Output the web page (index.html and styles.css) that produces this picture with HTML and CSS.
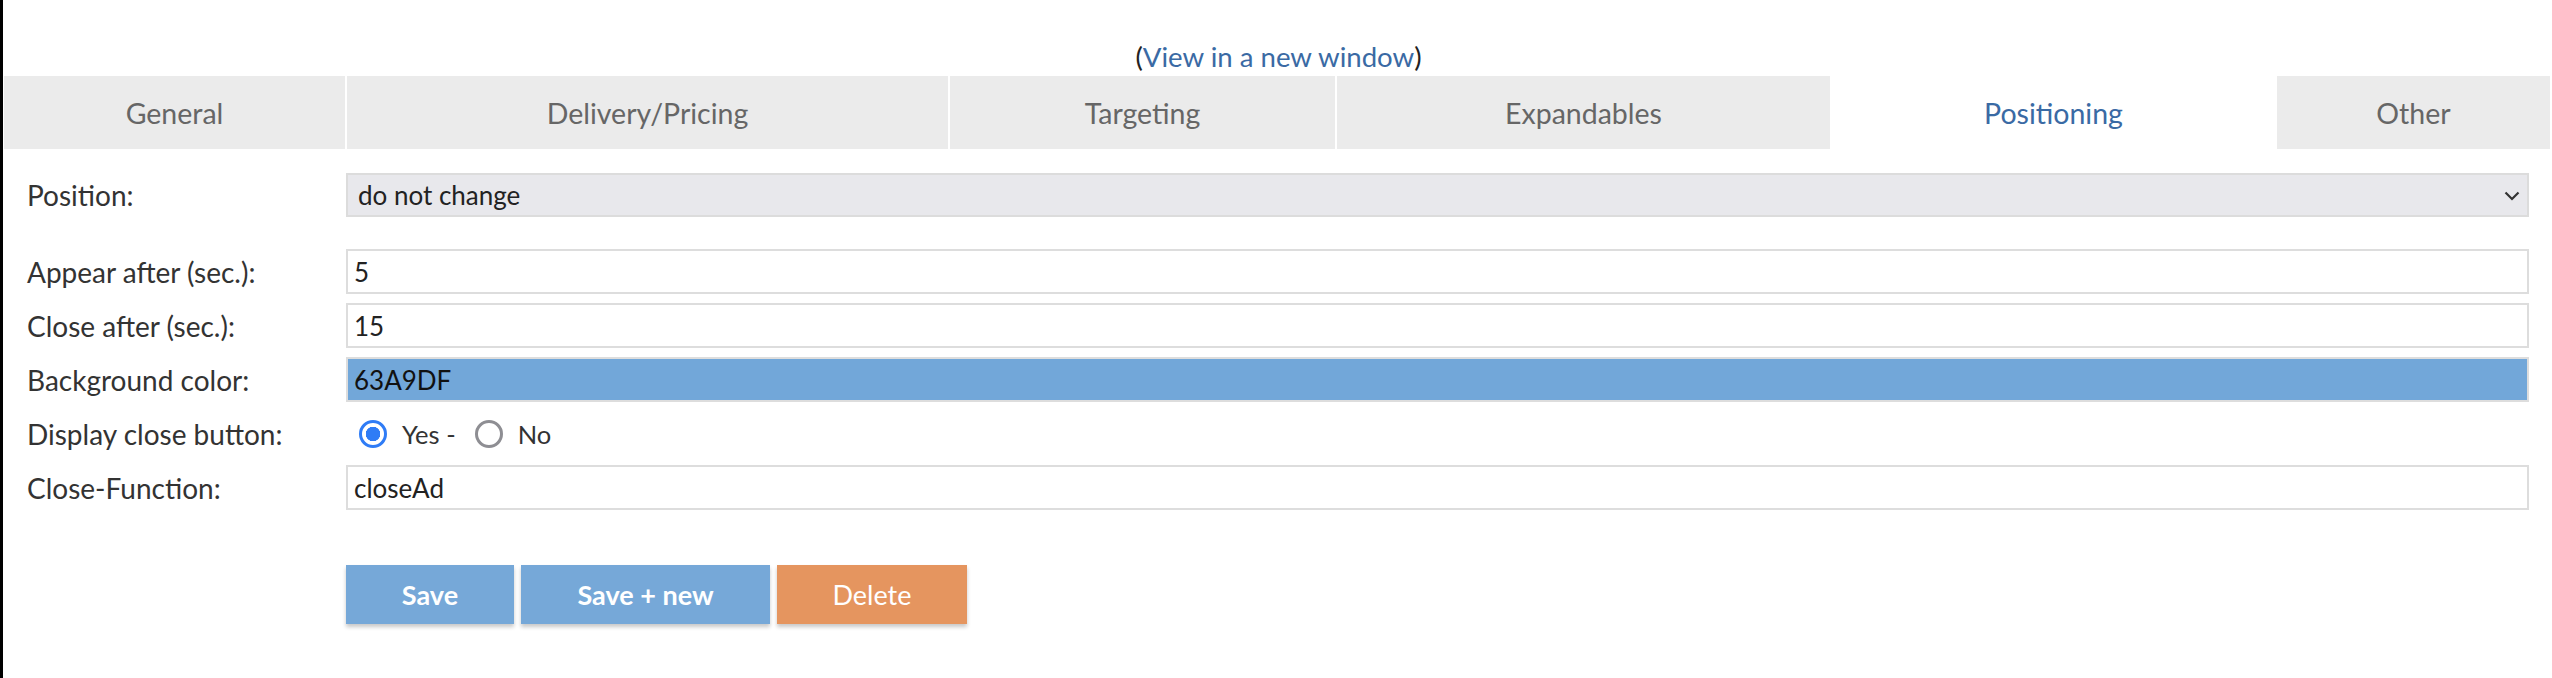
FILE: index.html
```html
<!DOCTYPE html>
<html lang="en">
<head>
<meta charset="utf-8">
<title>Positioning</title>
<link rel="stylesheet" href="styles.css">
</head>
<body>
<div class="page">
  <div class="viewlink">(<a href="#">View in a new window</a>)</div>
  <nav class="tabs">
    <div class="tab">General</div>
    <div class="tab">Delivery/Pricing</div>
    <div class="tab">Targeting</div>
    <div class="tab">Expandables</div>
    <div class="tab active">Positioning</div>
    <div class="tab">Other</div>
  </nav>
  <form class="form">
    <div class="row row-select">
      <label class="label">Position:</label>
      <div class="select-wrap">
        <select class="select"><option>do not change</option></select>
        <svg class="chevron" width="16" height="10" viewBox="0 0 16 10"><path d="M1.5 1.5 L8 8 L14.5 1.5" fill="none" stroke="#333" stroke-width="2.2"/></svg>
      </div>
    </div>
    <div class="fields">
      <div class="row">
        <label class="label">Appear after (sec.):</label>
        <input class="input" type="text" value="5">
      </div>
      <div class="row">
        <label class="label">Close after (sec.):</label>
        <input class="input" type="text" value="15">
      </div>
      <div class="row">
        <label class="label">Background color:</label>
        <input class="input input-color" type="text" value="63A9DF">
      </div>
      <div class="row">
        <label class="label">Display close button:</label>
        <div class="radios">
          <span class="radio checked"></span><span class="radio-text">Yes -</span>
          <span class="radio"></span><span class="radio-text">No</span>
        </div>
      </div>
      <div class="row">
        <label class="label">Close-Function:</label>
        <input class="input" type="text" value="closeAd">
      </div>
    </div>
    <div class="buttons">
      <button type="button" class="btn btn-save">Save</button>
      <button type="button" class="btn btn-savenew">Save + new</button>
      <button type="button" class="btn btn-delete">Delete</button>
    </div>
  </form>
</div>
</body>
</html>
```
FILE: styles.css
```css
* { box-sizing: border-box; }
html, body { margin: 0; padding: 0; background: #fff; }
body { font-family: Lato, "Open Sans", "Liberation Sans", sans-serif; color: #333; }

.page {
  border-left: 3px solid #000;
  min-height: 678px;
  padding-left: 1px;
}

.viewlink {
  height: 76px;
  display: flex;
  justify-content: center;
  align-items: flex-end;
  padding-bottom: 4px;
  padding-left: 1px;
  font-size: 27.6px;
  line-height: 30px;
  color: #222;
}
.viewlink a { color: #3a6aa4; text-decoration: none; }

.tabs {
  display: grid;
  grid-template-columns: 341fr 601fr 385fr 493fr 443fr 273fr;
  column-gap: 2px;
  height: 73px;
  margin-right: 2px;
}
.tab {
  background: #ebebeb;
  color: #666;
  font-size: 28.5px;
  display: flex;
  align-items: center;
  justify-content: center;
}
.tab.active { background: #fff; color: #3a6aa4; }

.form { padding-left: 23px; padding-right: 23px; margin-top: 24px; }

.row {
  display: grid;
  grid-template-columns: 319px 1fr;
  align-items: center;
  height: 45px;
}
.row-select { height: 44px; margin-bottom: 32px; }

.label { font-size: 28px; color: #333; }

.fields { display: flex; flex-direction: column; gap: 9px; }

.select-wrap { position: relative; height: 44px; }
.select {
  appearance: none;
  -webkit-appearance: none;
  width: 100%;
  height: 44px;
  margin: 0;
  border: 2px solid #dcdcdc;
  background: #e8e8ec;
  font-family: inherit;
  font-size: 26px;
  color: #222;
  padding: 0 10px;
  border-radius: 0;
}
.chevron { position: absolute; right: 9px; top: 18px; pointer-events: none; }

.input {
  width: 100%;
  height: 45px;
  margin: 0;
  border: 2px solid #dddddd;
  background: #fff;
  font-family: inherit;
  font-size: 26px;
  color: #222;
  padding: 0 6px;
  border-radius: 0;
  outline: none;
}
.input-color { background: #72a7d9; color: #111; }

.radios { display: flex; align-items: center; padding-left: 13px; }
.radio {
  width: 28px;
  height: 28px;
  border-radius: 50%;
  border: 3px solid #8e8e93;
  background: #fff;
  flex: none;
}
.radio.checked {
  border-color: #2f7cf6;
  background: radial-gradient(circle, #2f7cf6 0 7px, #fff 7.5px);
}
.radio-text { font-size: 25.5px; color: #333; margin-left: 15px; margin-right: 19px; }

.buttons { display: flex; gap: 7px; margin-top: 55px; padding-left: 319px; }
.btn {
  height: 59px;
  border: 0;
  color: #fff;
  font-family: inherit;
  font-size: 27px;
  box-shadow: 0 3px 4px rgba(0, 0, 0, 0.22);
  padding: 0;
}
.btn-save { width: 168px; background: #76a8d8; font-weight: 700; }
.btn-savenew { width: 249px; background: #76a8d8; font-weight: 700; }
.btn-delete { width: 190px; background: #e5955f; font-weight: 400; }
```
